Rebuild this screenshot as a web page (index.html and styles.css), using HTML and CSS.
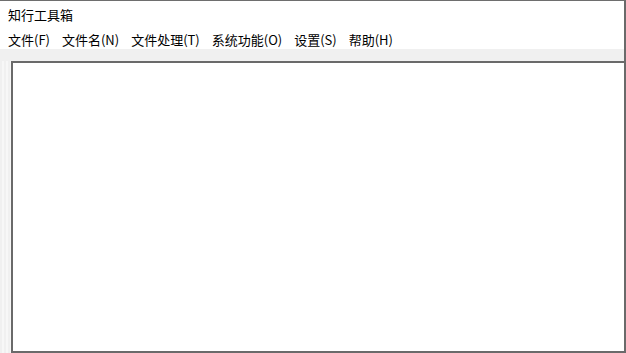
FILE: index.html
```html
<!DOCTYPE html>
<html lang="zh-CN">

<head>
  <meta charset="UTF-8">
  <meta name="viewport" content="width=device-width, initial-scale=1.0">
  <title>知行工具箱</title>
  <link rel="stylesheet" href="styles.css">
</head>

<body>
  <div class="window">
    <div class="titlebar">知行工具箱</div>
    <ul class="menubar">
      <li>文件(F)</li>
      <li>文件名(N)</li>
      <li>文件处理(T)</li>
      <li>系统功能(O)</li>
      <li>设置(S)</li>
      <li>帮助(H)</li>
    </ul>
    <div class="client">
      <div class="grip"></div>
      <div class="panel"></div>
    </div>
  </div>
</body>

</html>
```

FILE: styles.css
```css
body {
  margin: 0;
  padding: 0;
  background: #fff;
  font-family: "Noto Sans CJK SC", "Noto Sans", sans-serif;
  color: #000;
}

.window {
  width: 626px;
  height: 353px;
  box-sizing: border-box;
  border-top: 1px solid #6e6e6e;
  border-right: 2px solid #6a6a6a;
  display: flex;
  flex-direction: column;
  overflow: hidden;
}

.titlebar {
  height: 28px;
  line-height: 28px;
  padding-left: 8px;
  font-size: 13px;
}

.menubar {
  list-style: none;
  margin: 0;
  padding: 0 0 0 8px;
  height: 20px;
  display: flex;
  font-size: 13px;
  line-height: 22px;
}

.menubar li {
  margin-right: 12px;
}

.client {
  flex: 1;
  display: flex;
  background: #f0f0f0;
  padding-top: 12px;
}

.grip {
  width: 11px;
  background: repeating-linear-gradient(90deg, #f0f0f0 0, #f0f0f0 2px, #f7f7f7 2px, #f7f7f7 4px);
}

.panel {
  flex: 1;
  background: #fff;
  border: 2px solid #6a6a6a;
  border-right: none;
}
```
